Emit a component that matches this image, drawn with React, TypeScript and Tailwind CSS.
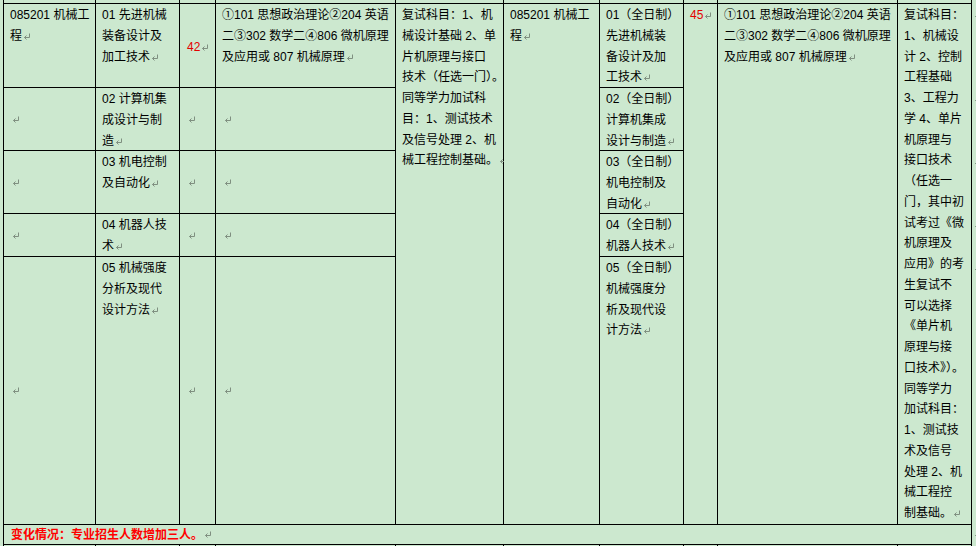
import React from 'react';

// Word-style paragraph mark
const Mark: React.FC = () => (
  <svg width="8" height="8" viewBox="0 0 8 8" className="ml-px inline-block align-[-1px]" fill="none">
    <path d="M6.5 0.5V4.5H1.5" stroke="#7f8f80" strokeWidth="1" />
    <path d="M3.5 2.5L1.5 4.5L3.5 6.5" stroke="#7f8f80" strokeWidth="1" />
  </svg>
);

type CellProps = {
  pos: string;
  lines?: string[];
  middle?: boolean;
  red?: boolean;
  mark?: boolean;
};

const Cell: React.FC<CellProps> = ({ pos, lines = [], middle = false, red = false, mark = true }) => (
  <div
    className={`bg-[#cce8cf] pl-[6px] whitespace-nowrap ${pos} ${middle ? 'flex items-center' : 'pt-px'} ${
      red ? 'text-[#e40000]' : 'text-black'
    }`}
  >
    <div>
      {lines.map((line, i) => (
        <React.Fragment key={i}>
          {line}
          {i === lines.length - 1 && mark && <Mark />}
          {i < lines.length - 1 && <br />}
        </React.Fragment>
      ))}
      {lines.length === 0 && mark && <Mark />}
    </div>
  </div>
);

const Blank: React.FC<{ pos: string }> = ({ pos }) => <div className={`bg-[#cce8cf] ${pos}`} />;

const exam = ['①101 思想政治理论②204 英语', '二③302 数学二④806 微机原理', '及应用或 807 机械原理'];

const App: React.FC = () => {
  return (
    <div className="flex h-[546px] w-[976px] overflow-hidden bg-[#cce8cf] font-['Liberation_Sans','Noto_Sans_CJK_SC',sans-serif] text-[12px] leading-[20.75px]">
      <div className="ml-[3px] grid shrink-0 grid-cols-[91px_83px_35px_179px_107px_95px_83px_33px_179px_73px] grid-rows-[3px_83px_62px_62px_42px_267px_19px_40px] gap-px bg-black px-px">
        {/* previous row, cut off */}
        <Blank pos="col-start-1 row-start-1" />
        <Blank pos="col-start-2 row-start-1" />
        <Blank pos="col-start-3 row-start-1" />
        <Blank pos="col-start-4 row-start-1" />
        <Blank pos="col-start-5 row-start-1" />
        <Blank pos="col-start-6 row-start-1" />
        <Blank pos="col-start-7 row-start-1" />
        <Blank pos="col-start-8 row-start-1" />
        <Blank pos="col-start-9 row-start-1" />
        <Blank pos="col-start-10 row-start-1" />

        {/* left half */}
        <Cell pos="col-start-1 row-start-2" lines={['085201 机械工', '程']} />
        <Cell pos="col-start-2 row-start-2" lines={['01 先进机械', '装备设计及', '加工技术']} />
        <Cell pos="col-start-3 row-start-2 pl-[7px] pt-[3px]" lines={['42']} middle red />
        <Cell pos="col-start-4 row-start-2" lines={exam} />

        <Cell pos="col-start-1 row-start-3 pl-[7px]" middle />
        <Cell pos="col-start-2 row-start-3" lines={['02 计算机集', '成设计与制', '造']} />
        <Cell pos="col-start-3 row-start-3 pl-[7px]" middle />
        <Cell pos="col-start-4 row-start-3 pl-[7px]" middle />

        <Cell pos="col-start-1 row-start-4 pl-[7px]" middle />
        <Cell pos="col-start-2 row-start-4" lines={['03 机电控制', '及自动化']} />
        <Cell pos="col-start-3 row-start-4 pl-[7px]" middle />
        <Cell pos="col-start-4 row-start-4 pl-[7px]" middle />

        <Cell pos="col-start-1 row-start-5 pl-[7px]" middle />
        <Cell pos="col-start-2 row-start-5" lines={['04 机器人技', '术']} />
        <Cell pos="col-start-3 row-start-5 pl-[7px]" middle />
        <Cell pos="col-start-4 row-start-5 pl-[7px]" middle />

        <Cell pos="col-start-1 row-start-6 pl-[7px]" middle />
        <Cell pos="col-start-2 row-start-6" lines={['05 机械强度', '分析及现代', '设计方法']} />
        <Cell pos="col-start-3 row-start-6 pl-[7px]" middle />
        <Cell pos="col-start-4 row-start-6 pl-[7px]" middle />

        <Cell
          pos="col-start-5 row-start-2 row-span-5"
          lines={[
            '复试科目：1、机',
            '械设计基础 2、单',
            '片机原理与接口',
            '技术（任选一门）。',
            '同等学力加试科',
            '目：1、测试技术',
            '及信号处理 2、机',
            '械工程控制基础。',
          ]}
        />

        {/* right half */}
        <Cell pos="col-start-6 row-start-2 row-span-5" lines={['085201 机械工', '程']} />
        <Cell pos="col-start-7 row-start-2" lines={['01（全日制）', '先进机械装', '备设计及加', '工技术']} />
        <Cell pos="col-start-7 row-start-3" lines={['02（全日制）', '计算机集成', '设计与制造']} />
        <Cell pos="col-start-7 row-start-4" lines={['03（全日制）', '机电控制及', '自动化']} />
        <Cell pos="col-start-7 row-start-5" lines={['04（全日制）', '机器人技术']} />
        <Cell pos="col-start-7 row-start-6" lines={['05（全日制）', '机械强度分', '析及现代设', '计方法']} />
        <Cell pos="col-start-8 row-start-2 row-span-5" lines={['45']} red />
        <Cell pos="col-start-9 row-start-2 row-span-5" lines={exam} />
        <Cell
          pos="col-start-10 row-start-2 row-span-5"
          lines={[
            '复试科目：',
            '1、机械设',
            '计 2、控制',
            '工程基础',
            '3、工程力',
            '学 4、单片',
            '机原理与',
            '接口技术',
            '（任选一',
            '门，其中初',
            '试考过《微',
            '机原理及',
            '应用》的考',
            '生复试不',
            '可以选择',
            '《单片机',
            '原理与接',
            '口技术》）。',
            '同等学力',
            '加试科目：',
            '1、测试技',
            '术及信号',
            '处理 2、机',
            '械工程控',
            '制基础。',
          ]}
        />

        {/* change note */}
        <div className="col-span-10 col-start-1 row-start-7 flex items-center bg-[#cce8cf] pl-[7px] leading-none">
          <span className="font-bold text-[#ff0000]">变化情况：专业招生人数增加三人。</span>
          <Mark />
        </div>

        {/* next row, cut off */}
        <Blank pos="col-start-1 row-start-8" />
        <Blank pos="col-start-2 row-start-8" />
        <Blank pos="col-start-3 row-start-8" />
        <Blank pos="col-start-4 row-start-8" />
        <Blank pos="col-start-5 row-start-8" />
        <Blank pos="col-start-6 row-start-8" />
        <Blank pos="col-start-7 row-start-8" />
        <Blank pos="col-start-8 row-start-8" />
        <Blank pos="col-start-9 row-start-8" />
        <Blank pos="col-start-10 row-start-8" />
      </div>

      {/* end-of-row marks, clipped by the window edge */}
      <div className="flex shrink-0 flex-col gap-px pl-px">
        <div className="h-[3px]" />
        <div className="h-[83px] pt-px"><Mark /></div>
        <div className="h-[62px] pt-px"><Mark /></div>
        <div className="h-[62px] pt-px"><Mark /></div>
        <div className="h-[42px] pt-px"><Mark /></div>
        <div className="h-[267px] pt-px"><Mark /></div>
        <div className="flex h-[19px] items-center"><Mark /></div>
      </div>
    </div>
  );
};

export default App;
